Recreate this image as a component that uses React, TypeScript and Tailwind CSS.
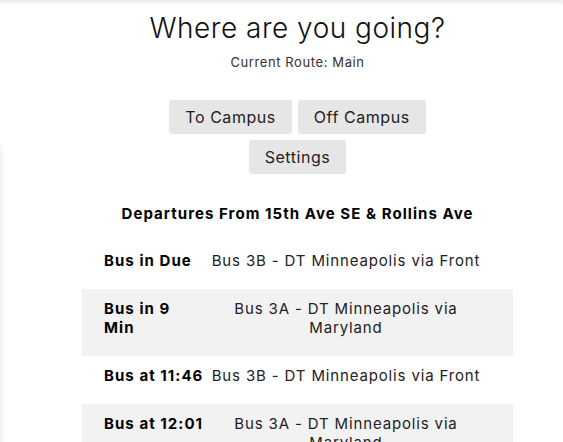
import React from "react"

interface Departure {
  when: string
  route: string
}

const departures: Departure[] = [
  { when: "Bus in Due", route: "Bus 3B - DT Minneapolis via Front" },
  { when: "Bus in 9 Min", route: "Bus 3A - DT Minneapolis via Maryland" },
  { when: "Bus at 11:46", route: "Bus 3B - DT Minneapolis via Front" },
  { when: "Bus at 12:01", route: "Bus 3A - DT Minneapolis via Maryland" },
]

const btn = "bg-[#e6e6e6] rounded-[3px] px-[16px] h-[34px] text-[16px] tracking-[0.55px] text-[#222] flex items-center"

export default function App() {
  return (
    <div className="relative h-[442px] overflow-hidden bg-white font-['Inter',sans-serif] text-[#1a1a1a]">
      {/* top shadow */}
      <div className="absolute inset-x-0 top-0 h-[6px] bg-gradient-to-b from-[#ececec] to-white/0" />
      {/* left shadow */}
      <div className="absolute left-0 top-[145px] bottom-0 w-[5px] bg-gradient-to-r from-[#f3f3f3] to-white/0" />

      <div className="pl-[32px] flex flex-col items-center">
        <h1 className="mt-[11px] text-[28px] leading-[34px] font-light tracking-[0.5px] text-[#111]">
          Where are you going?
        </h1>
        <p className="mt-[9px] text-[13px] leading-[16px] tracking-[0.6px] text-[#333]">Current Route: Main</p>

        <div className="mt-[30px] flex flex-col items-center gap-[6px]">
          <div className="flex gap-[6px]">
            <button className={btn}>To Campus</button>
            <button className={btn}>Off Campus</button>
          </div>
          <button className={btn}>Settings</button>
        </div>

        <h2 className="mt-[30px] text-[15px] leading-[20px] font-bold tracking-[1.05px] text-black">
          Departures From 15th Ave SE &amp; Rollins Ave
        </h2>

        <div className="mt-[17px] w-[431px]">
          {departures.map((d, i) => (
            <div
              key={i}
              className={`flex pt-[10px] pb-[19px] text-[15px] leading-[19px] ${i % 2 === 1 ? "bg-[#f2f2f2]" : "bg-white"}`}
            >
              <div className="w-[100px] shrink-0 ml-[22px] font-bold tracking-[1.05px] text-black">{d.when}</div>
              <div className="w-[276px] shrink-0 ml-[4px] text-center tracking-[0.85px] text-[#222]">{d.route}</div>
            </div>
          ))}
        </div>
      </div>
    </div>
  )
}
